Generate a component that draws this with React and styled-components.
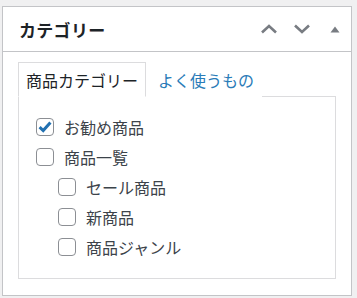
import styled, { createGlobalStyle } from 'styled-components'

const GlobalStyle = createGlobalStyle`
    html, body {
        margin: 0;
        padding: 0;
        background: #f0f0f1;
    }
    body {
        font-family: "Noto Sans CJK JP", "Noto Sans", sans-serif;
        color: #1d2327;
    }
`

const categories = [
    { name: 'お勧め商品', checked: true, depth: 0 },
    { name: '商品一覧', checked: false, depth: 0 },
    { name: 'セール商品', checked: false, depth: 1 },
    { name: '新商品', checked: false, depth: 1 },
    { name: '商品ジャンル', checked: false, depth: 1 },
]

const App = () => {
    return (
        <Page>
            <GlobalStyle />
            <Box>
                <Header>
                    <Title>カテゴリー</Title>
                    <Actions>
                        <IconButton aria-label="上へ移動">
                            <svg width="18" height="10" viewBox="0 0 18 10">
                                <path d="M2 8.5 L9 2 L16 8.5" fill="none" stroke="#787c82" strokeWidth="2.6" />
                            </svg>
                        </IconButton>
                        <IconButton aria-label="下へ移動">
                            <svg width="18" height="10" viewBox="0 0 18 10">
                                <path d="M2 1.5 L9 8 L16 1.5" fill="none" stroke="#787c82" strokeWidth="2.6" />
                            </svg>
                        </IconButton>
                        <Toggle aria-label="パネルを閉じる">
                            <svg width="10" height="7" viewBox="0 0 10 7">
                                <path d="M0.5 6.5 L5 0.5 L9.5 6.5 Z" fill="#787c82" />
                            </svg>
                        </Toggle>
                    </Actions>
                </Header>
                <Body>
                    <Tabs>
                        <Tab $active>商品カテゴリー</Tab>
                        <Tab>よく使うもの</Tab>
                    </Tabs>
                    <Panel>
                        {categories.map((c) => (
                            <Item key={c.name} $depth={c.depth}>
                                <Check $checked={c.checked}>
                                    {c.checked && (
                                        <svg width="16" height="16" viewBox="0 0 16 16">
                                            <path d="M2.6 8.2 L6.2 11.6 L13.4 3.4" fill="none" stroke="#2271b1" strokeWidth="3" />
                                        </svg>
                                    )}
                                </Check>
                                <Label>{c.name}</Label>
                            </Item>
                        ))}
                    </Panel>
                </Body>
            </Box>
        </Page>
    )
}

const Page = styled.div`
    padding: 6px 5px 0 2px;
`

const Box = styled.div`
    width: 350px;
    height: 290px;
    box-sizing: border-box;
    background: #fff;
    border: 1px solid #c3c4c7;
`

const Header = styled.div`
    height: 44px;
    border-bottom: 1px solid #c3c4c7;
    display: flex;
    align-items: center;
    justify-content: space-between;
    padding: 0 11px 0 16px;
`

const Title = styled.h2`
    margin: 0;
    font-size: 17px;
    font-weight: 700;
    color: #1d2327;
    letter-spacing: 0.3px;
`

const Actions = styled.div`
    display: flex;
    align-items: center;
    gap: 15px;
`

const IconButton = styled.button`
    border: none;
    background: none;
    padding: 0;
    display: flex;
    cursor: pointer;
`

const Toggle = styled(IconButton)`
    margin-left: 4px;
`

const Body = styled.div`
    padding: 10px 15px 0 15px;
`

const Tabs = styled.div`
    display: flex;
    margin-bottom: -1px;
    position: relative;
`

const Tab = styled.div`
    height: 35px;
    box-sizing: border-box;
    padding: 0 7px;
    display: flex;
    align-items: center;
    font-size: 16px;
    color: ${(p) => (p.$active ? '#1d2327' : '#2a7cb8')};
    background: #fff;
    border: 1px solid ${(p) => (p.$active ? '#dcdcde' : 'transparent')};
    border-bottom-color: ${(p) => (p.$active ? '#fff' : 'transparent')};
    ${(p) => !p.$active && 'padding-left: 11px;'}
`

const Panel = styled.div`
    height: 183px;
    box-sizing: border-box;
    border: 1px solid #dcdcde;
    padding: 21px 17px 0;
    display: flex;
    flex-direction: column;
    gap: 12px;
`

const Item = styled.label`
    display: flex;
    align-items: center;
    gap: 10px;
    margin-left: ${(p) => p.$depth * 22}px;
    height: 18px;
`

const Check = styled.span`
    flex: 0 0 18px;
    width: 18px;
    height: 18px;
    box-sizing: border-box;
    border: 1px solid #8c8f94;
    border-radius: 4px;
    display: flex;
    align-items: center;
    justify-content: center;
    background: #fff;
`

const Label = styled.span`
    font-size: 16px;
    color: #3c434a;
    line-height: 1;
`

export default App
